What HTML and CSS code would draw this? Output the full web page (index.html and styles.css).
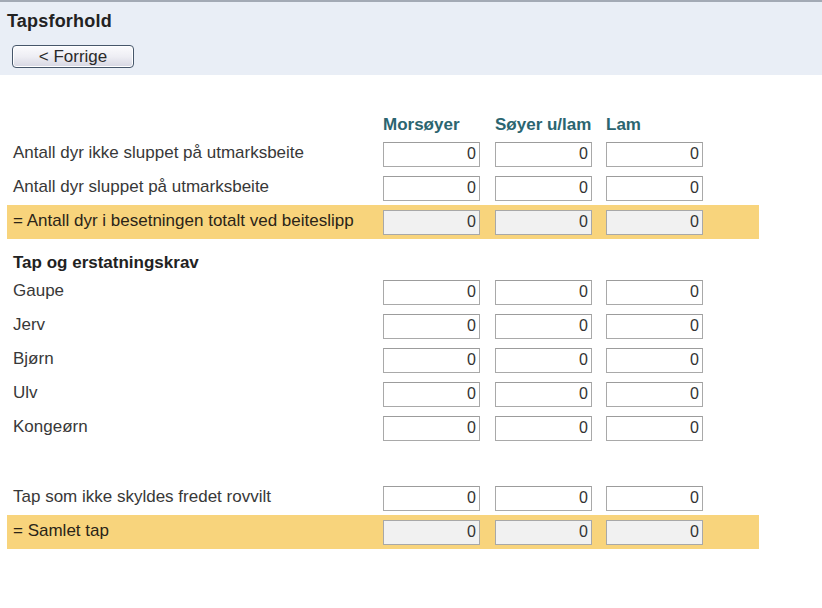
FILE: index.html
```html
<!DOCTYPE html>
<html lang="no">
<head>
<meta charset="utf-8">
<title>Tapsforhold</title>
<link rel="stylesheet" href="styles.css">
</head>
<body>
<div class="header">
  <h1 class="title">Tapsforhold</h1>
  <button class="btn" type="button">&lt; Forrige</button>
</div>

<div class="form">
  <div class="row colheads">
    <div class="label"></div>
    <div class="colhead">Morsøyer</div>
    <div class="colhead">Søyer u/lam</div>
    <div class="colhead">Lam</div>
  </div>

  <div class="row">
    <div class="label">Antall dyr ikke sluppet på utmarksbeite</div>
    <input class="num" value="0"><input class="num" value="0"><input class="num" value="0">
  </div>
  <div class="row">
    <div class="label">Antall dyr sluppet på utmarksbeite</div>
    <input class="num" value="0"><input class="num" value="0"><input class="num" value="0">
  </div>
  <div class="row total">
    <div class="label">= Antall dyr i besetningen totalt ved beiteslipp</div>
    <input class="num ro" value="0" readonly><input class="num ro" value="0" readonly><input class="num ro" value="0" readonly>
  </div>

  <div class="section">Tap og erstatningskrav</div>

  <div class="row">
    <div class="label">Gaupe</div>
    <input class="num" value="0"><input class="num" value="0"><input class="num" value="0">
  </div>
  <div class="row">
    <div class="label">Jerv</div>
    <input class="num" value="0"><input class="num" value="0"><input class="num" value="0">
  </div>
  <div class="row">
    <div class="label">Bjørn</div>
    <input class="num" value="0"><input class="num" value="0"><input class="num" value="0">
  </div>
  <div class="row">
    <div class="label">Ulv</div>
    <input class="num" value="0"><input class="num" value="0"><input class="num" value="0">
  </div>
  <div class="row">
    <div class="label">Kongeørn</div>
    <input class="num" value="0"><input class="num" value="0"><input class="num" value="0">
  </div>

  <div class="spacer"></div>

  <div class="row">
    <div class="label">Tap som ikke skyldes fredet rovvilt</div>
    <input class="num" value="0"><input class="num" value="0"><input class="num" value="0">
  </div>
  <div class="row total">
    <div class="label">= Samlet tap</div>
    <input class="num ro" value="0" readonly><input class="num ro" value="0" readonly><input class="num ro" value="0" readonly>
  </div>
</div>
</body>
</html>
```

FILE: styles.css
```css
html, body {
  margin: 0;
  padding: 0;
  background: #ffffff;
}

body {
  font-family: "Liberation Sans", Arial, sans-serif;
  font-size: 17px;
  color: #383838;
}

.header {
  background: #e9eef6;
  border-top: 2px solid #a3aab5;
  height: 75px;
  padding: 0 0 0 7px;
  box-sizing: border-box;
}

.title {
  margin: 0;
  padding-top: 8px;
  font-size: 18px;
  letter-spacing: 0.2px;
  font-weight: bold;
  color: #222222;
  line-height: 22px;
}

.btn {
  display: block;
  margin: 13px 0 0 5px;
  width: 122px;
  height: 23px;
  padding: 0;
  font-family: "Liberation Sans", Arial, sans-serif;
  font-size: 17px;
  line-height: 19px;
  color: #2a2a2a;
  border: 1px solid #46566a;
  border-radius: 4px;
  background: linear-gradient(#fbfbfd 0%, #eeeef4 50%, #d6d6e2 100%);
  box-shadow: inset 0 0 0 1px #ffffff;
}

.form {
  padding: 37px 0 0 7px;
  width: 752px;
}

.row {
  display: grid;
  grid-template-columns: 376px 112px 111px 153px;
  align-items: center;
  height: 34px;
}

.colheads {
  height: 25px;
  align-items: end;
}

.colhead {
  font-weight: bold;
  color: #2b6570;
  line-height: 20px;
  padding-bottom: 2px;
}

.label {
  padding-left: 6px;
  line-height: 20px;
  margin-top: -2px;
}

.total {
  background: #f8d47c;
}

.total .label {
  color: #2a2418;
}

.num {
  box-sizing: border-box;
  width: 97px;
  height: 25px;
  margin: 0;
  padding: 0 3px 0 2px;
  border: 1px solid #a9a9a9;
  border-top-color: #9c9c9c;
  background: #ffffff;
  text-align: right;
  font-family: "Liberation Sans", Arial, sans-serif;
  font-size: 16px;
  color: #333333;
}

.num.ro {
  background: #f1f1f1;
  border-color: #a8a8a8;
}

.section {
  height: 36px;
  padding-left: 6px;
  font-weight: bold;
  color: #222222;
  line-height: 20px;
  box-sizing: border-box;
  padding-top: 14px;
}

.spacer {
  height: 36px;
}
```
